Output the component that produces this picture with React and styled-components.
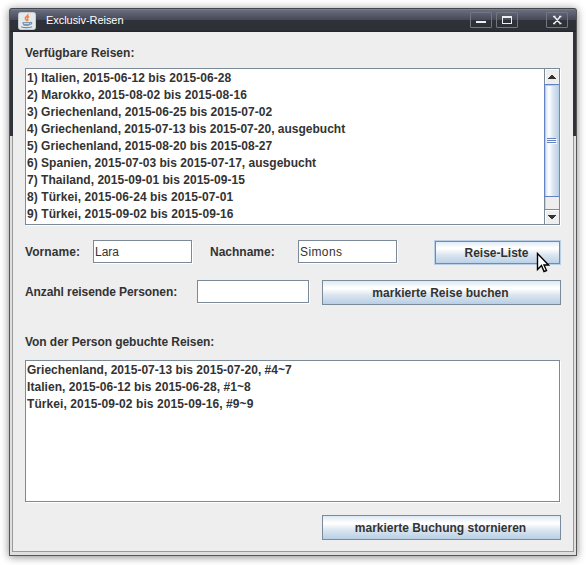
import React from 'react';
import styled, { createGlobalStyle, css } from 'styled-components';

const Global = createGlobalStyle`
  * { box-sizing: border-box; }
  body { margin: 0; background: #fff; overflow: hidden; }
`;

const Desktop = styled.main`
  position: relative;
  width: 586px;
  height: 565px;
  padding: 8px 9px 9px;
  font: bold 12px/17px 'Liberation Sans', Arial, sans-serif;
  color: #333;
`;

const Window = styled.section`
  display: flex;
  flex-direction: column;
  width: 568px;
  height: 548px;
  padding: 0 3px 3px;
  border: 1px solid #55555a;
  border-top-color: #44464e;
  border-radius: 3px 3px 0 0;
  background:
    linear-gradient(#30333a, #30333a) 0 0 / 100% 127px no-repeat,
    linear-gradient(#e0dfdf, #e0dfdf) 0 100% / 100% 3px no-repeat,
    linear-gradient(90deg, #e0dfdf 2px, #999 2px, #999 calc(100% - 2px), #e0dfdf calc(100% - 2px));
  box-shadow: 0 1px 8px rgba(0, 0, 0, 0.48);
`;

const TitleBar = styled.header`
  display: flex;
  flex: none;
  height: 23px;
  margin: 0 -3px;
  padding: 3px 8px 0;
  color: #fff;
  font-weight: normal;
  font-size: 11px;
  background: linear-gradient(#8f93a2 0, #686d7e 1px, #474858 11px, #2f3238 11px, #2d3036 21px, #202329 23px);
  border-radius: 2px 2px 0 0;
`;

const Title = styled.h1`
  flex: 1;
  margin: 0 0 0 10px;
  font: inherit;
  line-height: 17px;
  letter-spacing: -0.05px;
`;

const WindowButton = styled.button`
  display: grid;
  place-items: center;
  width: 22px;
  height: 16px;
  padding: 0;
  margin-left: ${(p) => p.$gap || 0}px;
  border: 1px solid #73757f;
  border-radius: 1px;
  background: transparent;
`;

const Content = styled.div`
  flex: 1;
  display: flex;
  flex-direction: column;
  padding: 13px 12px 0 12px;
  background: #eee;
  border-bottom: 1px solid #999;
`;

const Label = styled.label`
  width: ${(p) => (p.$width ? `${p.$width}px` : 'auto')};
  flex: none;
  white-space: nowrap;
  letter-spacing: ${(p) => p.$spacing || 0}px;
`;

const sunken = css`
  border: 1px solid #7a8a99;
  background: #fff;
  box-shadow: 1px 1px #fff;
`;

const ListBox = styled.div`
  ${sunken}
  display: flex;
  flex: none;
  width: 535px;
  height: ${(p) => p.$height}px;
  margin-top: ${(p) => p.$top}px;
`;

const Items = styled.ul`
  flex: 1;
  margin: 0;
  padding: 1px 0 0 1px;
  list-style: none;
`;

const Item = styled.li`
  height: 17px;
  white-space: nowrap;
  letter-spacing: ${(p) => p.$spacing || 0}px;
`;

const ScrollBar = styled.div`
  display: flex;
  flex-direction: column;
  width: 15px;
  border-left: 1px solid #7a8a99;
  background: #eee;
`;

const Arrow = styled.div`
  display: grid;
  place-items: center;
  height: 15px;
  border-top: 1px solid ${(p) => (p.$down ? '#7a8a99' : '#fff')};
  box-shadow: inset 1px ${(p) => (p.$down ? 1 : 0)}px #fff;
`;

const Thumb = styled.div`
  display: grid;
  place-items: center;
  height: 113px;
  margin-left: -1px;
  border: 1px solid #6382bf;
  border-right: 0;
  background: linear-gradient(90deg, #b8cfe5 1px, #dde8f3 1px, #fff 4px, #dbe6f0 8px, #b8cfe5);
  box-shadow: inset 0 1px #b8cfe5;
`;

const Track = styled.div`
  flex: 1;
  box-shadow: inset 1px 0 #c8d0d8;
`;

const Row = styled.div`
  display: flex;
  flex: none;
  align-items: flex-start;
  height: ${(p) => p.$height}px;
  margin-top: ${(p) => p.$top}px;

  ${Label} { line-height: 24px; }
`;

const Field = styled.input`
  ${sunken}
  width: ${(p) => p.$width}px;
  height: 23px;
  margin: 0 ${(p) => p.$after}px 0 0;
  padding: 0 0 0 1px;
  border-radius: 0;
  outline: 0;
  color: #333;
  font: 12px 'Liberation Sans', Arial, sans-serif;
  letter-spacing: ${(p) => p.$spacing || 0}px;
`;

const Button = styled.button`
  width: ${(p) => p.$width}px;
  height: 25px;
  flex: none;
  margin: 0 0 0 auto;
  padding: 0 2px 0 0;
  border: 1px solid #7a8a99;
  border-radius: 0;
  background: linear-gradient(#dde8f3, #fff 30%, #fff 34%, #dbe6f0 60%, #b8cfe5);
  box-shadow: ${(p) => (p.$focus ? 'inset 0 0 0 1px #7a8a99' : 'none')};
  ${(p) => p.$focus && 'border-color: #b8cfe5;'}
  color: #333;
  font: bold 12px 'Liberation Sans', Arial, sans-serif;
  letter-spacing: ${(p) => p.$spacing || 0}px;
`;

const Cursor = styled.svg`
  position: absolute;
  left: 536px;
  top: 252px;
`;

const trips = [
  ['1) Italien, 2015-06-12 bis 2015-06-28', 0.055],
  ['2) Marokko, 2015-08-02 bis 2015-08-16', 0.085],
  ['3) Griechenland, 2015-06-25 bis 2015-07-02', 0.025],
  ['4) Griechenland, 2015-07-13 bis 2015-07-20, ausgebucht', 0],
  ['5) Griechenland, 2015-08-20 bis 2015-08-27', 0.025],
  ['6) Spanien, 2015-07-03 bis 2015-07-17, ausgebucht', 0.02],
  ['7) Thailand, 2015-09-01 bis 2015-09-15', 0.03],
  ['8) Türkei, 2015-06-24 bis 2015-07-01', 0.075],
  ['9) Türkei, 2015-09-02 bis 2015-09-16', 0.085],
];

const bookings = [
  ['Griechenland, 2015-07-13 bis 2015-07-20, #4~7', 0.02],
  ['Italien, 2015-06-12 bis 2015-06-28, #1~8', 0.05],
  ['Türkei, 2015-09-02 bis 2015-09-16, #9~9', 0.085],
];

const JavaIcon = () => (
  <svg width="18" height="18" viewBox="0 0 18 18">
    <rect x=".5" y=".5" width="17" height="17" rx="2" fill="#e4e9ec" stroke="#c3ccd2" />
    <path d="M10 2c.8 2-3.300 2.800-2.700 4.600.3 1 1.500 1.800 1.600 2.600M11.200 4.500c-2 1-2.200 1.800-1.500 2.700.5.700 0 1.300-.4 1.600" fill="none" stroke="#ee8444" strokeWidth="1.500" />
    <path d="M4.500 10h7.500v1.500q0 2.500-2 2.500H7q-2 0-2.500-2.500z" fill="#7f9bb3" />
    <path d="M6 11.500h5" stroke="#c9d6e0" />
    <path d="M12 10.500c2.500-.8 2.500 1.800-.5 2M3.200 14.700c2.500 1.200 8 1.200 11 0" fill="none" stroke="#6e8da8" strokeWidth="1.100" />
  </svg>
);

export default function App() {
  return (
    <Desktop>
      <Global />
      <Window>
        <TitleBar>
          <JavaIcon />
          <Title>Exclusiv-Reisen</Title>
          <WindowButton aria-label="Minimieren">
            <svg width="20" height="14"><path d="M5 8h10v2H5z" fill="#eee" /></svg>
          </WindowButton>
          <WindowButton $gap={4} aria-label="Maximieren">
            <svg width="20" height="14"><path d="M5 3h10v8H5zM6 5v5h8V5z" fill="#eee" fillRule="evenodd" /></svg>
          </WindowButton>
          <WindowButton $gap={28} aria-label="Schließen">
            <svg width="20" height="14"><path d="M6 3.500h2.500M12 3.500h2.500M6 10.500h2.500M12 10.500h2.500M7.200 3.500l6 7M13.300 3.500l-6 7" fill="none" stroke="#eee" strokeWidth="1.500" /></svg>
          </WindowButton>
        </TitleBar>
        <Content>
          <Label>Verfügbare Reisen:</Label>
          <ListBox $height={157} $top={6}>
            <Items>{trips.map(([t, s]) => <Item key={t} $spacing={s}>{t}</Item>)}</Items>
            <ScrollBar>
              <Arrow><svg width="8" height="4" shapeRendering="crispEdges"><path d="M3 0h2v1h1v1h1v1h1v1H0V3h1V2h1V1h1z" fill="#333" /></svg></Arrow>
              <Thumb>
                <svg width="10" height="6" shapeRendering="crispEdges">
                  <path d="M0 .5h9M0 2.500h9M0 4.500h9" stroke="#6382bf" />
                  <path d="M1 1.500h9M1 3.500h9M1 5.500h9" stroke="#fff" />
                </svg>
              </Thumb>
              <Track />
              <Arrow $down><svg width="8" height="4" shapeRendering="crispEdges"><path d="M0 0h8v1H7v1H6v1H5v1H3V3H2V2H1V1H0z" fill="#333" /></svg></Arrow>
            </ScrollBar>
          </ListBox>
          <Row $top={15} $height={25}>
            <Label $width={68} $spacing={0.08}>Vorname:</Label>
            <Field $width={99} $after={18} defaultValue="Lara" />
            <Label $width={88}>Nachname:</Label>
            <Field $width={99} $after={0} $spacing={0.4} defaultValue="Simons" />
            <Button $width={127} $focus>Reise-Liste</Button>
          </Row>
          <Row $top={15} $height={25}>
            <Label $width={172} $spacing={-0.08}>Anzahl reisende Personen:</Label>
            <Field $width={112} $after={0} />
            <Button $width={239} $spacing={0.04}>markierte Reise buchen</Button>
          </Row>
          <Row $top={25} $height={24}>
            <Label $spacing={-0.06}>Von der Person gebuchte Reisen:</Label>
          </Row>
          <ListBox $height={142} $top={6}>
            <Items>{bookings.map(([t, s]) => <Item key={t} $spacing={s}>{t}</Item>)}</Items>
          </ListBox>
          <Row $top={13} $height={25}>
            <Button $width={239}>markierte Buchung stornieren</Button>
          </Row>
        </Content>
      </Window>
      <Cursor width="14" height="22" viewBox="0 0 14 22">
        <path d="M1.500 1.500v16l4-4 2.500 6 2.500-1-2.500-5.500h4.500z" fill="#fff" stroke="#000" strokeWidth="1.400" />
      </Cursor>
    </Desktop>
  );
}
